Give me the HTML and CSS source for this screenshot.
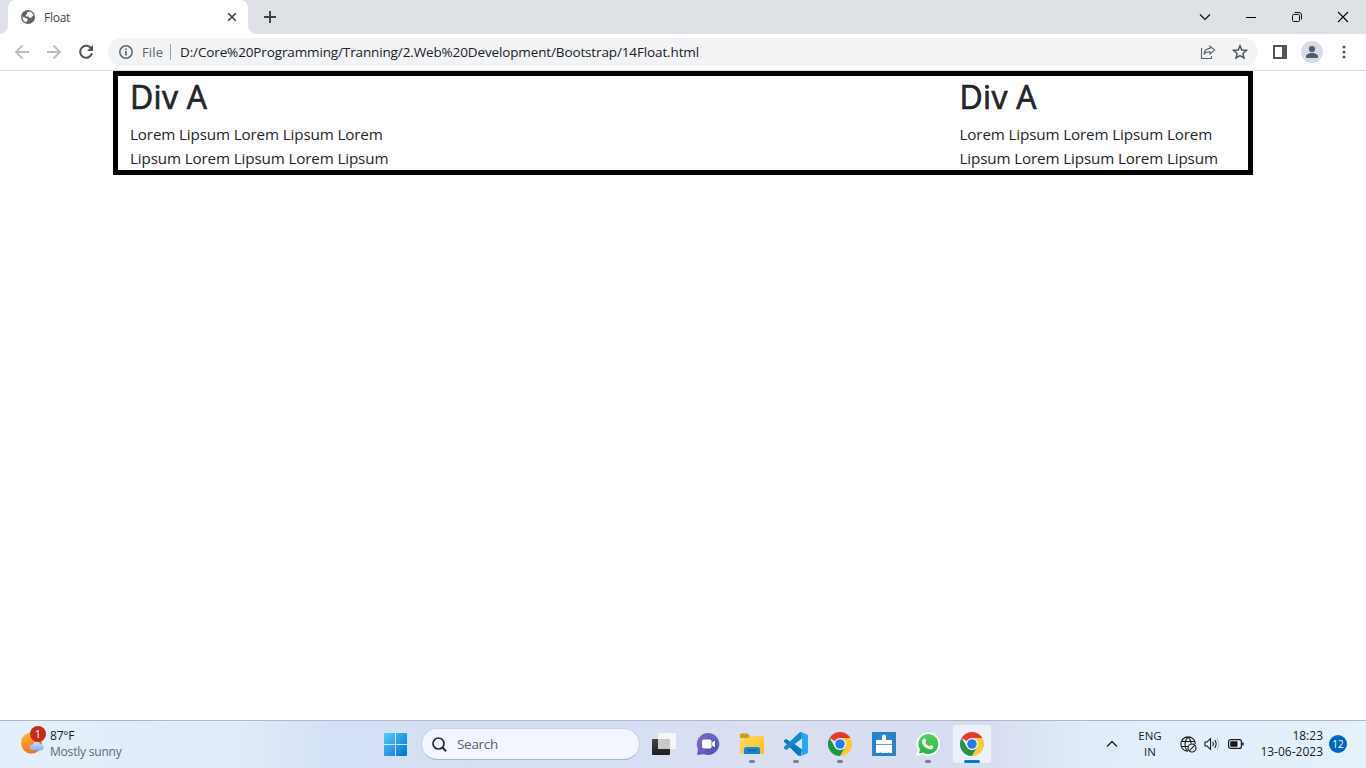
FILE: index.html
```html
<!DOCTYPE html>
<html lang="en">
<head>
<meta charset="utf-8">
<title>Float</title>
<link rel="stylesheet" href="styles.css">
</head>
<body>
<svg width="0" height="0" class="defs">
  <defs>
    <linearGradient id="win" x1="0" y1="0" x2="1" y2="1"><stop offset="0" stop-color="#4fd0fb"/><stop offset="1" stop-color="#006fd1"/></linearGradient>
    <linearGradient id="sun" x1="0" y1="0" x2=".4" y2="1"><stop offset="0" stop-color="#f9bd32"/><stop offset="1" stop-color="#f0701c"/></linearGradient>
    <linearGradient id="cloud" x1="0" y1="0" x2="0" y2="1"><stop offset="0" stop-color="#c9e0fb"/><stop offset="1" stop-color="#86aef0"/></linearGradient>
    <linearGradient id="dark" x1="0" y1="0" x2="0" y2="1"><stop offset="0" stop-color="#454545"/><stop offset="1" stop-color="#1c1c1c"/></linearGradient>
    <linearGradient id="chat" x1="0" y1="0" x2="1" y2="1"><stop offset="0" stop-color="#8a66b4"/><stop offset=".5" stop-color="#6460c4"/><stop offset="1" stop-color="#4a4aa8"/></linearGradient>
    <linearGradient id="folder" x1="0" y1="0" x2="1" y2="1"><stop offset="0" stop-color="#ffdc70"/><stop offset="1" stop-color="#fdbc1c"/></linearGradient>
    <linearGradient id="wa" x1="0" y1="0" x2="0" y2="1"><stop offset="0" stop-color="#5bd066"/><stop offset="1" stop-color="#27b43e"/></linearGradient>
    <symbol id="chrome" viewBox="0 0 24 24">
      <path fill="#e33b2e" d="M12 12 1.600 6A12 12 0 0 1 22.400 6z"/>
      <path fill="#fcc934" d="M12 6h10.400A12 12 0 0 1 12 24l5.200-9z"/>
      <path fill="#1e9446" d="M12 24A12 12 0 0 1 1.600 6l5.200 9L12 18l5.200-3z"/>
      <circle cx="12" cy="12" r="6" fill="#fff"/><circle cx="12" cy="12" r="4.800" fill="#2a78ec"/>
    </symbol>
  </defs>
</svg>

<header class="tabstrip">
  <div class="tab">
    <svg class="globe" width="14" height="14" viewBox="0 0 14 14"><circle cx="7" cy="7" r="7" fill="#5f6368"/><path fill="#fff" d="M8.200 1.500 6 2.600v1.500L4.500 5.300 5 6.400l2.400.2 1.200 1.500 1.800-.3.8-1.600 1.400-.1A5.600 5.600 0 0 0 8.200 1.500zM1.500 6.500l3.200 1.600 1.500.3.700 1.500-1.200 1L5.400 12.300A5.600 5.600 0 0 1 1.500 6.500z"/></svg>
    <span class="tab-title">Float</span>
    <svg width="10" height="10" viewBox="0 0 10 10"><path d="m1.200 1.200 7.600 7.600m0-7.600L1.200 8.800" stroke="#3c4043" stroke-width="1.600"/></svg>
  </div>
  <svg class="newtab" width="12" height="12" viewBox="0 0 12 12"><path d="M6 0v12M0 6h12" stroke="#3c4043" stroke-width="1.900"/></svg>
  <div class="window-buttons">
    <span><svg width="12" height="12" viewBox="0 0 12 12"><path d="m1 3.500 5 5 5-5" fill="none" stroke="#111" stroke-width="1.200"/></svg></span>
    <span><svg width="12" height="12" viewBox="0 0 12 12"><path d="M1 6.500h10" stroke="#000"/></svg></span>
    <span><svg width="12" height="12" viewBox="0 0 12 12" fill="none" stroke="#111"><rect x="1.500" y="3.500" width="7" height="7" rx="1.200"/><path d="M3.500 1.500H8a2.500 2.500 0 0 1 2.500 2.500v4.500"/></svg></span>
    <span><svg width="12" height="12" viewBox="0 0 12 12"><path d="m1 1 10 10M11 1 1 11" stroke="#000" stroke-width="1.100"/></svg></span>
  </div>
</header>

<nav class="toolbar">
  <svg width="16" height="16" viewBox="0 0 16 16" fill="none" stroke="#babcbe" stroke-width="1.900"><path d="M15 8H2m6.500-6.500L2 8l6.500 6.500"/></svg>
  <svg width="16" height="16" viewBox="0 0 16 16" fill="none" stroke="#babcbe" stroke-width="1.900"><path d="M1 8h13M7.500 1.500 14 8l-6.500 6.500"/></svg>
  <svg width="16" height="16" viewBox="0 0 16 16"><path d="M13 4.200A6 6 0 1 0 14 9.300" fill="none" stroke="#505459" stroke-width="2"/><path d="M15 1v6H9z" fill="#505459"/></svg>
  <div class="address">
    <svg width="14" height="14" viewBox="0 0 14 14"><circle cx="7" cy="7" r="6.200" fill="none" stroke="#5f6368" stroke-width="1.500"/><path d="M7 6v4.500M7 3.500v1.500" stroke="#5f6368" stroke-width="1.700"/></svg>
    <span class="scheme">File</span><i class="divider"></i>
    <span class="url">D:/Core%20Programming/Tranning/2.Web%20Development/Bootstrap/14Float.html</span>
    <svg class="share" width="16" height="15" viewBox="0 0 16 15" fill="none" stroke="#5f6368" stroke-width="1.100"><path d="M1.500 3v10.500h10V11"/><path d="M10 1.200 14.700 5 10 9V6.800C7 6.700 5.200 7.500 4 9.700 4.300 6 6.500 3.700 10 3.400z"/></svg>
    <svg width="16" height="16" viewBox="0 0 16 16"><path d="m8 1.800 1.800 4.200 4.600.4-3.500 3 1.100 4.500-4-2.400-4 2.400 1.100-4.500-3.500-3 4.600-.4z" fill="none" stroke="#505459" stroke-width="1.500"/></svg>
  </div>
  <svg class="panel" width="14" height="14" viewBox="0 0 14 14"><path fill="#50545a" fill-rule="evenodd" d="M0 0h14v14H0zM2 2v10h7V2z"/></svg>
  <svg class="avatar" width="22" height="22" viewBox="0 0 22 22"><circle cx="11" cy="11" r="11" fill="#dadce4"/><circle cx="11" cy="8" r="3.100" fill="#4f5d73"/><path d="M5 17v-1.500c0-2.300 3-3.500 6-3.500s6 1.200 6 3.500V17z" fill="#4f5d73"/></svg>
  <svg class="dots" width="4" height="14" viewBox="0 0 4 14" fill="#505459"><circle cx="2" cy="2" r="1.500"/><circle cx="2" cy="7" r="1.500"/><circle cx="2" cy="12" r="1.500"/></svg>
</nav>

<main class="page">
  <div class="container">
    <section class="box"><h2>Div A</h2><p>Lorem Lipsum Lorem Lipsum Lorem<br>Lipsum Lorem Lipsum Lorem Lipsum</p></section>
    <section class="box"><h2>Div A</h2><p>Lorem Lipsum Lorem Lipsum Lorem<br>Lipsum Lorem Lipsum Lorem Lipsum</p></section>
  </div>
</main>

<footer class="taskbar">
  <div class="weather">
    <div class="weather-icon">
      <svg width="24" height="24" viewBox="0 0 24 24"><circle cx="10.500" cy="11" r="10.500" fill="url(#sun)"/><path d="M11.500 18.500a3 3 0 0 1 .2-6 4 4 0 0 1 7.300-.5 3.300 3.300 0 0 1 1 6.500z" fill="url(#cloud)"/></svg>
      <b class="alert">1</b>
    </div>
    <div class="weather-text"><span class="temp">87°F</span><br><span class="sky">Mostly sunny</span></div>
  </div>
  <svg class="start" width="23" height="23" viewBox="0 0 23 23" fill="url(#win)"><path d="M1 0h10v11H0V1a1 1 0 0 1 1-1zM12 0h10a1 1 0 0 1 1 1v10H12zM0 12h11v11H1a1 1 0 0 1-1-1zM12 12h11v10a1 1 0 0 1-1 1H12z"/></svg>
  <div class="search">
    <svg width="15" height="15" viewBox="0 0 15 15" fill="none" stroke="#2b2b2b"><circle cx="6.500" cy="6.500" r="5.500" stroke-width="1.700"/><path d="m10.500 10.500 3.500 3.700" stroke-width="2"/></svg>
    <span>Search</span>
  </div>
  <div class="apps">
    <span class="app"><svg width="24" height="24" viewBox="0 0 24 24"><rect y="7" width="18" height="16" rx="1" fill="url(#dark)"/><rect x="6" y="1" width="18" height="16" rx="1" fill="#f5f5f5"/><path d="M6 7h12v10H7a1 1 0 0 1-1-1z" fill="#c9c9c9"/></svg></span>
    <span class="app chat"><svg width="24" height="24" viewBox="0 0 24 24"><path d="M12 1a11.300 11 0 1 1-4 21.300L1 23l1-6A11.200 11 0 0 1 12 1z" fill="url(#chat)"/><rect x="6" y="7.500" width="9.500" height="9" rx="1.800" fill="#fff"/><path d="m16.200 10.500 2.800-2v7l-2.800-2z" fill="#fff"/></svg></span>
    <span class="app running"><svg width="24" height="24" viewBox="0 0 24 24"><path d="M0 3a1.500 1.500 0 0 1 1.500-1.500h6L10 4v4H0z" fill="#d99a13"/><path d="M0 6h8l2-2h12.500A1.500 1.500 0 0 1 24 5.500v15a1.500 1.500 0 0 1-1.500 1.500h-21A1.500 1.500 0 0 1 0 20.500z" fill="url(#folder)"/><path d="M4 22v-4.500A2.500 2.500 0 0 1 6.500 15h11a2.500 2.500 0 0 1 2.500 2.500V22z" fill="#1684d5"/><path d="M8 18.500h8" stroke="#0a60a8" stroke-width="1.500"/></svg></span>
    <span class="app running"><svg width="24" height="24" viewBox="0 0 24 24"><path d="M17 0 6.500 10 2.500 7 0 8.300v1.500l14 13.700 3 .5 1-6z" fill="#0878bf"/><path d="M18 6 2.500 18 0 16.500V15L16 0l4 2z" fill="#1687cf"/><path d="m17 0 6 2.500a1.500 1.500 0 0 1 1 1.500v16a1.500 1.500 0 0 1-1 1.500L17 24l1-2z" fill="#28a8f1"/><path d="M18 6.500v11L10.500 12z" fill="#d9e0f3"/></svg></span>
    <span class="app running"><svg width="24" height="24"><use href="#chrome"/></svg></span>
    <span class="app"><svg width="24" height="24" viewBox="0 0 24 24"><path fill="#2981ca" d="M0 0h24v24H0z"/><path fill="#fff" d="M10 8V4.500a2 2 0 0 1 4 0V8h5a1 1 0 0 1 1 1v3H4V9a1 1 0 0 1 1-1z"/><path fill="#fff" d="M4 12.700h16V21h-3.300l-.4-1.800-.3 1.800H9l-.4-1.800L8.300 21H4z"/></svg></span>
    <span class="app running"><svg width="24" height="24" viewBox="0 0 24 24"><path fill="#fff" d="M12 0a12 12 0 1 1-5.500 22.500L0 24l1.700-6.200A12 12 0 0 1 12 0z"/><path fill="url(#wa)" d="M12 2a10 10 0 1 1-5 18.500L2.800 21.600 4 17.500A10 10 0 0 1 12 2z"/><path fill="#fff" d="M8 6.500c.6-.3 1.100-.1 1.300.4l.8 2c.2.600-.9 1.500-.8 1.800.8 1.600 2.100 2.700 3.900 3.500.5.200 1.200-1.400 1.700-1.200l2.200 1.100c.7.400.1 2-.6 2.600-1.200 1-3 .6-4.500 0-2.500-1-4.300-2.800-5.500-5-1-1.800-.4-4.400 1.500-5.200z"/></svg></span>
    <span class="app active"><svg width="24" height="24"><use href="#chrome"/></svg></span>
  </div>
  <div class="tray">
    <svg class="up" width="12" height="8" viewBox="0 0 12 8"><path d="m1 6.500 5-5 5 5" fill="none" stroke="#222" stroke-width="1.400"/></svg>
    <div class="lang">ENG<br>IN</div>
    <svg class="net" width="17" height="17" viewBox="0 0 17 17" fill="none" stroke="#1b1b1b" stroke-width="1.100"><path d="M8 15.300A7.200 7.200 0 1 1 15.300 8M1.300 5.500h13.400M1.300 10.500H8M7.500 15C4 11 4 5 8 .8c2 2 3 4.200 3.200 6.700"/><circle cx="12" cy="12" r="4"/><path d="m9.200 14.800 5.600-5.600"/></svg>
    <svg class="sound" width="16" height="14" viewBox="0 0 16 14" fill="none" stroke="#1b1b1b" stroke-width="1.100"><path d="M1 5h2l3.500-3.300v10.600L3 9H1zM8.700 4.800q1.500 2.200 0 4.400M10.800 3q2.700 4 0 8"/><path d="M13 1.500q3.500 5.500 0 11" stroke="#b8c3ce"/></svg>
    <svg class="battery" width="16" height="10" viewBox="0 0 16 10"><rect x=".6" y=".6" width="12.800" height="8.800" rx="2" fill="none" stroke="#1b1b1b" stroke-width="1.200"/><rect x="2.200" y="2.200" width="7.300" height="5.600" rx=".8" fill="#1b1b1b"/><path d="M15 3.500v3" stroke="#1b1b1b" stroke-width="1.500"/></svg>
    <div class="clock"><span class="time">18:23</span><br><span class="date">13-06-2023</span></div>
    <b class="count">12</b>
  </div>
</footer>
</body>
</html>
```
FILE: styles.css
```css
* { box-sizing: border-box; }
body {
  margin: 0; width: 1366px; height: 768px; overflow: hidden;
  display: flex; flex-direction: column; background: #fff;
  font-family: "Open Sans", "Noto Sans", sans-serif;
}
svg { display: block; flex: none; }
.defs { position: absolute; }
span, b { white-space: nowrap; }

.tabstrip { height: 34px; flex: none; display: flex; align-items: center; background: #dee1e6; padding-left: 8px; }
.tab {
  width: 240px; height: 34px; display: flex; align-items: center; background: #fff;
  border-radius: 8px 8px 0 0; padding: 0 11px 0 13px; position: relative;
}
.tab::before, .tab::after { content: ""; position: absolute; bottom: 0; width: 8px; height: 8px; }
.tab::before { left: -8px; background: radial-gradient(circle at 0 0, #dee1e6 7.5px, #fff 8px); }
.tab::after { right: -8px; background: radial-gradient(circle at 100% 0, #dee1e6 7.5px, #fff 8px); }
.tab-title { flex: 1; margin-left: 9px; font-size: 12px; color: #45494d; letter-spacing: -.25px; }
.newtab { margin-left: 16px; }
.window-buttons { margin-left: auto; display: flex; height: 28px; }
.window-buttons span { width: 46px; display: flex; align-items: center; justify-content: center; }

.toolbar { height: 37px; flex: none; display: flex; align-items: center; gap: 16px; padding-left: 14px; border-bottom: 1px solid #dadce0; }
.address { width: 1150px; height: 28px; margin-left: -2px; display: flex; align-items: center; background: #f1f3f4; border-radius: 14px; padding: 0 10px 0 11px; font-size: 14px; }
.scheme { width: 28px; margin-left: 9px; color: #5f6368; font-size: 13px; letter-spacing: .15px; }
.divider { width: 1px; height: 16px; background: #9aa0a6; }
.url { flex: 1; margin-left: 9px; color: #202124; letter-spacing: -.13px; font-size: 13.5px; }
.share { margin-right: 16px; }
.panel { margin-left: -1px; }
.avatar { margin-left: -2px; }
.dots { margin-left: 3px; }

.page { flex: 1; display: flex; justify-content: center; align-items: flex-start; }
.container { width: 1140px; height: 104px; border: 5px solid #000; padding: 0 12px; display: flex; justify-content: space-between; color: #212529; }
.box { width: 276.5px; }
.box h2 { margin: 0 0 6px; padding-top: 2px; font-size: 32px; line-height: 38.4px; font-weight: 500; letter-spacing: .3px; -webkit-text-stroke: .7px #212529; }
.box p { margin: 0; font-size: 15.2px; line-height: 24px; letter-spacing: -.13px; white-space: nowrap; }

.taskbar {
  height: 48px; flex: none; display: flex; align-items: center; border-top: 1px solid #b1b8c1; padding-bottom: 1px;
  background: linear-gradient(90deg, #e3effa 0, #dfebf9 250px, #d4e0f6 330px, #d5dff6 600px, #dadff2 760px, #d6dcf1 980px, #e1edf9 1090px, #e4f0fa 100%);
}
.weather { width: 384px; flex: none; display: flex; align-items: center; padding-left: 21px; }
.weather-icon { position: relative; width: 24px; margin-right: 5px; }
.alert {
  position: absolute; left: 9px; top: -6px; width: 16px; height: 16px; border-radius: 50%;
  background: #c42b1c; color: #fff; font-size: 11px; line-height: 16px; font-weight: 400; text-align: center;
}
.weather-text { font-size: 12px; line-height: 16px; letter-spacing: -.2px; }
.temp { color: #1b1b1b; }
.sky { color: #616870; }
.search {
  width: 219px; height: 32px; margin-left: 14px; flex: none; display: flex; align-items: center; gap: 10px; padding-left: 10px;
  border: 1px solid #c8d0e6; border-bottom-color: #aab5cc; border-radius: 16px; background: #f2f6fe; color: #5c6066; font-size: 13.5px; letter-spacing: -.3px;
}
.apps { display: flex; margin-left: 2px; }
.app { width: 44px; height: 40px; display: flex; align-items: center; justify-content: center; position: relative; }
.chat svg { margin-right: 1px; }
.running::after, .active::after { content: ""; position: absolute; bottom: 1px; left: 19px; width: 6px; height: 3px; border-radius: 2px; background: #7d828e; }
.active::before { content: ""; position: absolute; left: 3px; top: 1px; width: 38px; height: 38px; border-radius: 4px; background: #edf1fa; z-index: 0; }
.active svg { position: relative; }
.active::after { left: 14px; width: 16px; background: #0078d4; }
.tray { display: flex; align-items: center; margin-left: auto; padding-right: 19px; color: #1b1b1b; font-size: 12px; line-height: 16px; }
.lang { width: 36px; margin-left: 14px; text-align: center; font-size: 11.5px; }
.net { margin-left: 12px; }
.sound { margin-left: 7px; }
.battery { margin-left: 8px; }
.clock { width: 79px; text-align: right; white-space: nowrap; }
.count { width: 18px; height: 18px; margin-left: 6px; border-radius: 50%; background: #0067c0; color: #fff; font-size: 10px; line-height: 18px; text-align: center; font-weight: 400; }
```
